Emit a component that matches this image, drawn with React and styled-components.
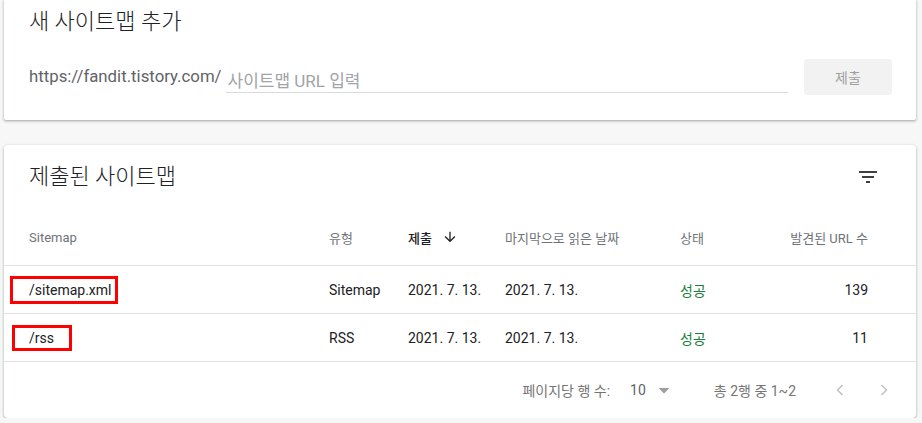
import React from "react";
import styled, { createGlobalStyle } from "styled-components";

const GlobalStyle = createGlobalStyle`
  html, body {
    margin: 0;
    padding: 0;
    background: #f7f7f7;
    font-family: Roboto, "Noto Sans CJK KR", sans-serif;
    color: #202124;
  }
`;

const rows = [
  { path: "/sitemap.xml", type: "Sitemap", submitted: "2021. 7. 13.", read: "2021. 7. 13.", status: "성공", count: 139, mark: { l: 16, r: 4, h: 22 } },
  { path: "/rss", type: "RSS", submitted: "2021. 7. 13.", read: "2021. 7. 13.", status: "성공", count: 11, mark: { l: 14, r: 15, h: 20 } },
];

export default function App() {
  return (
    <Page>
      <GlobalStyle />
      <AddCard>
        <Title>새 사이트맵 추가</Title>
        <AddRow>
          <Prefix>https://fandit.tistory.com/</Prefix>
          <UrlInput placeholder="사이트맵 URL 입력" />
          <SubmitButton disabled>제출</SubmitButton>
        </AddRow>
      </AddCard>

      <ListCard>
        <ListHead>
          <Title>제출된 사이트맵</Title>
          <IconButton aria-label="filter">
            <svg width="24" height="24" viewBox="0 0 24 24">
              <path fill="#3c4043" d="M10 18h4v-2h-4v2zM3 6v2h18V6H3zm3 7h12v-2H6v2z" />
            </svg>
          </IconButton>
        </ListHead>

        <HeaderRow>
          <HeadCell>Sitemap</HeadCell>
          <HeadCell>유형</HeadCell>
          <HeadCell $active>
            제출
            <svg width="16" height="16" viewBox="0 0 24 24">
              <path fill="#202124" d="M20 12l-1.41-1.41L13 16.17V4h-2v12.17l-5.58-5.59L4 12l8 8 8-8z" />
            </svg>
          </HeadCell>
          <HeadCell>마지막으로 읽은 날짜</HeadCell>
          <HeadCell>상태</HeadCell>
          <HeadCell $right>발견된 URL 수</HeadCell>
        </HeaderRow>

        {rows.map((r) => (
          <DataRow key={r.path}>
            <Cell>
              <Marked $l={r.mark.l} $r={r.mark.r} $h={r.mark.h}>{r.path}</Marked>
            </Cell>
            <Cell>{r.type}</Cell>
            <Cell>{r.submitted}</Cell>
            <Cell>{r.read}</Cell>
            <Cell $green>{r.status}</Cell>
            <Cell $right>{r.count}</Cell>
          </DataRow>
        ))}

        <Footer>
          <FootText>페이지당 행 수:</FootText>
          <PerPage>
            10
            <svg width="24" height="24" viewBox="0 0 24 24">
              <path fill="#9e9e9e" d="M6.5 10l5.5 5.5 5.5-5.5z" />
            </svg>
          </PerPage>
          <FootText>총 2행 중 1~2</FootText>
          <Pager>
            <IconButton aria-label="previous" disabled>
              <svg width="24" height="24" viewBox="0 0 24 24">
                <path d="M14.5 7l-5 5 5 5" fill="none" stroke="#bdbdbd" strokeWidth="1.4" />
              </svg>
            </IconButton>
            <IconButton aria-label="next" disabled>
              <svg width="24" height="24" viewBox="0 0 24 24">
                <path d="M9.5 7l5 5-5 5" fill="none" stroke="#bdbdbd" strokeWidth="1.4" />
              </svg>
            </IconButton>
          </Pager>
        </Footer>
      </ListCard>
    </Page>
  );
}

const Page = styled.div`
  width: 912px;
  padding: 0 6px 0 4px;
  display: flex;
  flex-direction: column;
  gap: 25px;
`;

const Card = styled.section`
  background: #fff;
  box-shadow: 0 1px 2px rgba(60, 64, 67, 0.3), 0 1px 3px 1px rgba(60, 64, 67, 0.12);
`;

const AddCard = styled(Card)`
  padding: 8px 24px 25px 25px;
  border-radius: 0 0 2px 2px;
`;

const ListCard = styled(Card)`
  border-radius: 4px;
`;

const Title = styled.h2`
  margin: 0;
  font-size: 22px;
  font-weight: 300;
  line-height: 28px;
  color: #202124;
`;

const AddRow = styled.div`
  display: flex;
  align-items: center;
  margin-top: 23px;
  height: 36px;
`;

const Prefix = styled.span`
  font-size: 16.8px;
  color: #5f6368;
  margin-top: -2px;
  margin-right: 4px;
`;

const UrlInput = styled.input`
  flex: 1;
  border: none;
  border-bottom: 1px solid #dadada;
  outline: none;
  font: inherit;
  font-size: 17px;
  padding: 2px 2px 1px;
  margin-top: 8px;
  background: transparent;
  color: #202124;
  &::placeholder {
    color: #a0a4a8;
  }
`;

const SubmitButton = styled.button`
  margin-left: 16px;
  width: 88px;
  height: 36px;
  border: none;
  border-radius: 4px;
  background: #f2f2f2;
  color: #9e9e9e;
  font: inherit;
  font-size: 14px;
`;

const ListHead = styled.div`
  display: flex;
  align-items: center;
  justify-content: space-between;
  height: 64px;
  padding: 0 36px 0 25px;
`;

const IconButton = styled.button`
  width: 24px;
  height: 24px;
  padding: 0;
  border: none;
  background: none;
  display: flex;
  align-items: center;
  justify-content: center;
`;

const Grid = styled.div`
  display: grid;
  grid-template-columns: 300px 79px 97px 175px 1fr 1fr;
  align-items: center;
  padding: 0 48px 0 25px;
  border-bottom: 1px solid #e0e0e0;
`;

const HeaderRow = styled(Grid)`
  height: 56px;
`;

const DataRow = styled(Grid)`
  height: 47px;
`;

const HeadCell = styled.div`
  display: flex;
  align-items: center;
  gap: 10px;
  font-size: 13px;
  font-weight: ${(p) => (p.$active ? 500 : 400)};
  color: ${(p) => (p.$active ? "#202124" : "#6f7378")};
  justify-content: ${(p) => (p.$right ? "flex-end" : "flex-start")};
  white-space: nowrap;
`;

const Cell = styled.div`
  font-size: 14px;
  color: ${(p) => (p.$green ? "#188038" : "#202124")};
  text-align: ${(p) => (p.$right ? "right" : "left")};
  white-space: nowrap;
`;

const Marked = styled.span`
  display: inline-block;
  border: 3px solid #f00;
  line-height: ${(p) => p.$h}px;
  padding: 0 ${(p) => p.$r}px 0 ${(p) => p.$l}px;
  margin-left: ${(p) => -(p.$l + 3)}px;
`;

const Footer = styled.div`
  display: flex;
  align-items: center;
  justify-content: flex-end;
  height: 56px;
  padding-right: 20px;
`;

const FootText = styled.span`
  font-size: 14px;
  color: #757575;
`;

const PerPage = styled.div`
  display: flex;
  align-items: center;
  gap: 6px;
  margin: 0 38px 0 20px;
  font-size: 14px;
  color: #5f6368;
`;

const Pager = styled.div`
  display: flex;
  gap: 20px;
  margin-left: 32px;
`;
